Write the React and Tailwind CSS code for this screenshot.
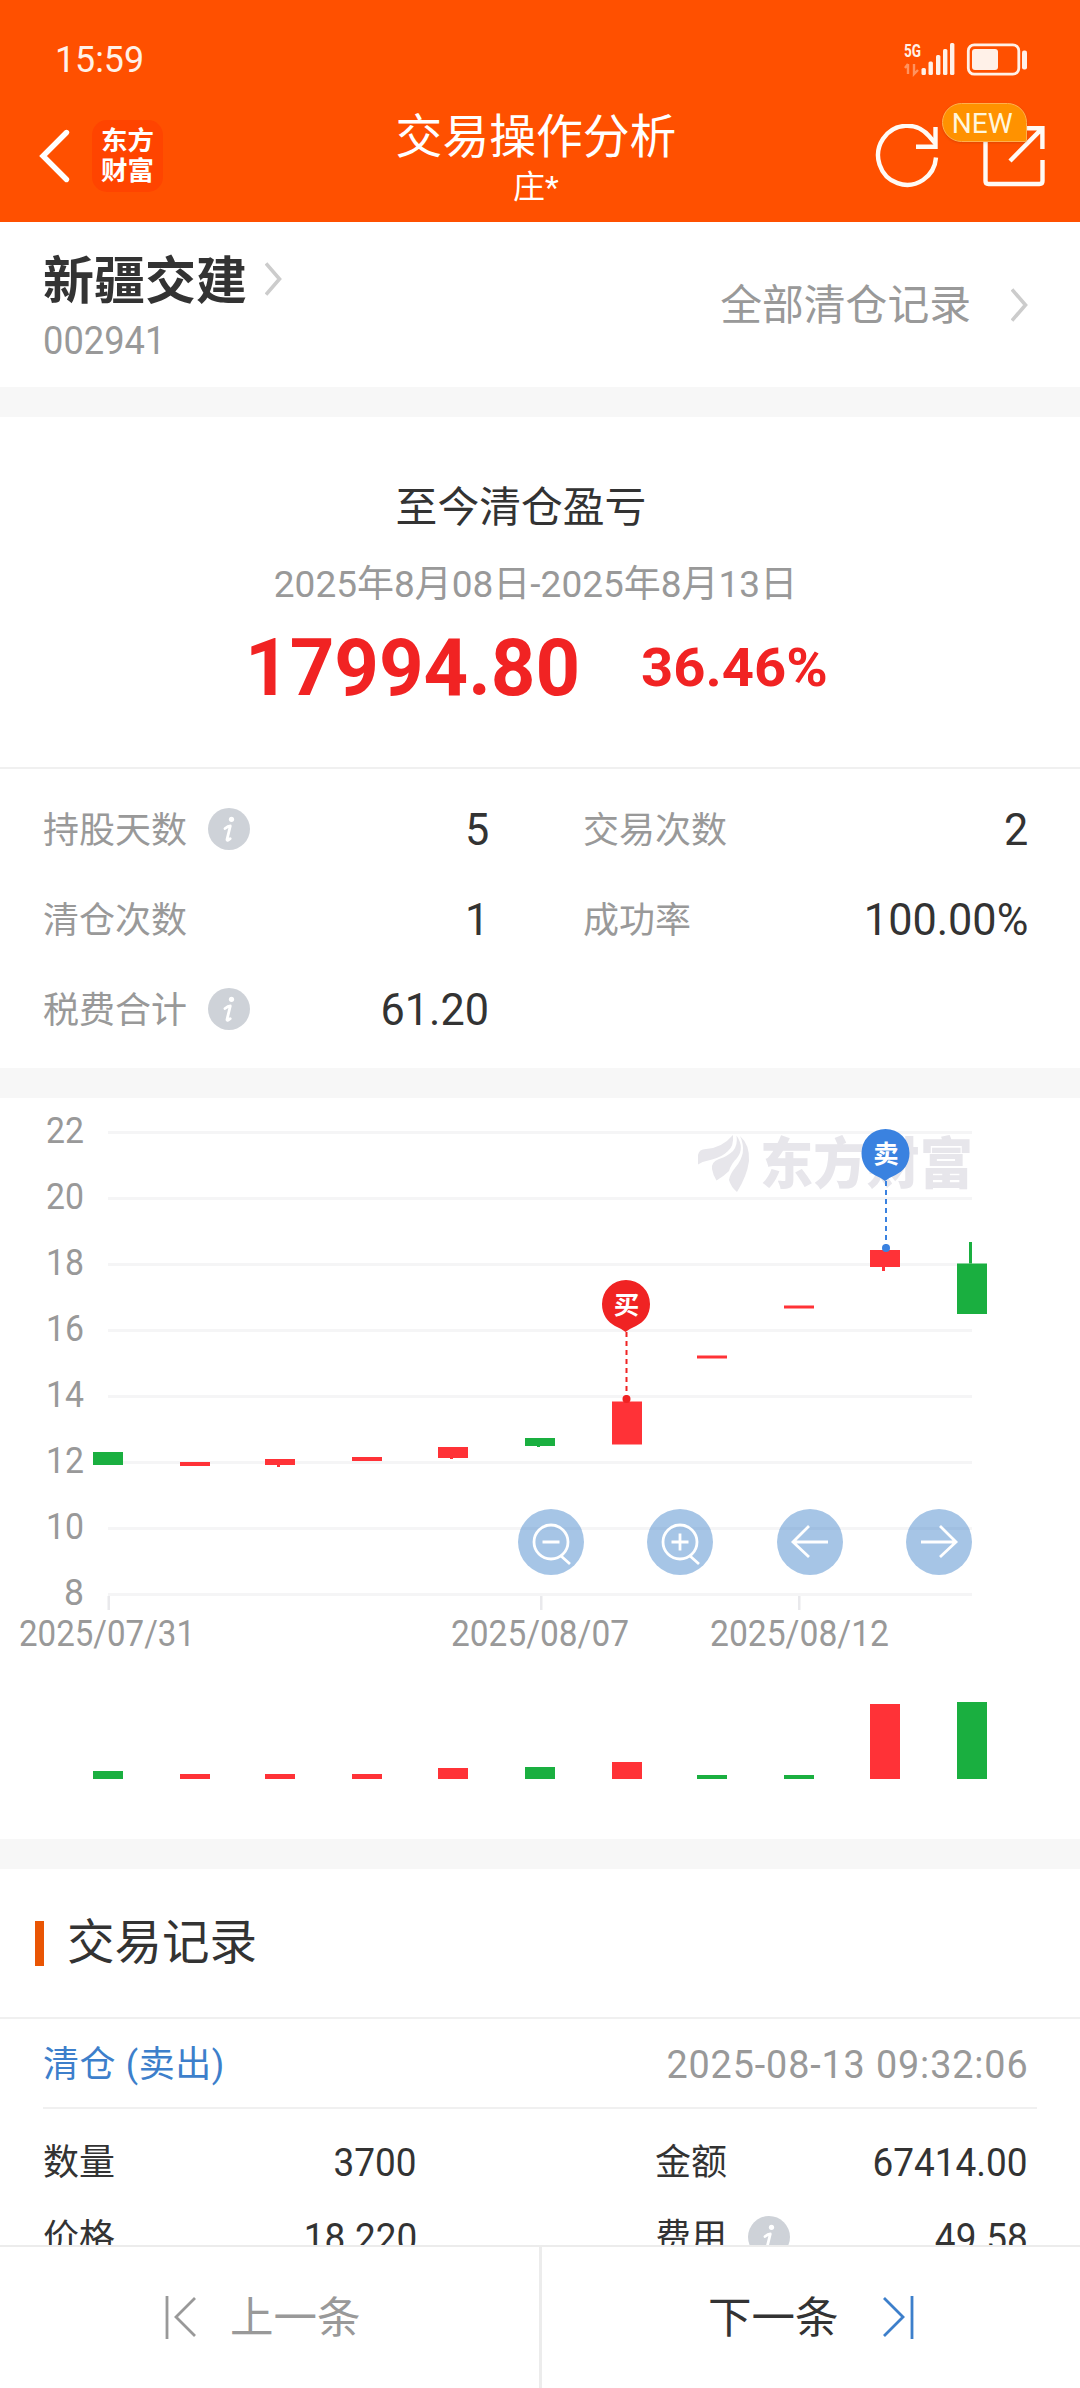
import clsx from 'clsx'

const UP = '#ff3237'
const DOWN = '#1aaf40'

const gridValues = [22, 20, 18, 16, 14, 12, 10, 8]

// y values are in the chart's own coordinate space
const candles = [
  { x: 93, top: 354, bottom: 367, color: DOWN },
  { x: 180, top: 364, bottom: 368, color: UP },
  { x: 265, top: 361, bottom: 367, low: 369, color: UP },
  { x: 352, top: 359, bottom: 363, color: UP },
  { x: 438, top: 349, bottom: 360, low: 361, color: UP },
  { x: 525, top: 340, bottom: 348, low: 349, color: DOWN },
  { x: 612, top: 303.5, bottom: 346.5, color: UP },
  { x: 697, top: 257.5, bottom: 260.5, color: UP },
  { x: 784, top: 207.5, bottom: 210.5, color: UP },
  { x: 870, top: 152, bottom: 169, low: 173, color: UP },
  { x: 957, top: 165.5, bottom: 216, high: 144, color: DOWN },
]

const volumes = [8, 5, 5, 5, 11, 12, 17, 4, 4, 75, 77]

const dates = [
  { x: 108.5, start: 19, length: 176, label: '2025/07/31' },
  { x: 541, start: 451, length: 178, label: '2025/08/07' },
  { x: 799, start: 710, length: 179, label: '2025/08/12' },
]

function Num({ className, children }) {
  return <span className={clsx('inline-block', className)}>{children}</span>
}

function InfoIcon({ className }) {
  return (
    <svg viewBox="0 0 42 42" className={clsx('h-[42px] w-[42px] shrink-0', className)}>
      <circle cx="21" cy="21" r="21" fill="#ced2d8" />
      <circle cx="23.5" cy="11.3" r="2.6" fill="#fff" />
      <path d="M17 20.5q3-2.500 5.300-2.500l-3.300 13.500q-.2 2 3.200-.8" fill="none" stroke="#fff" strokeWidth="2.8" strokeLinecap="round" strokeLinejoin="round" />
    </svg>
  )
}

function Chevron() {
  return (
    <svg viewBox="0 0 17 34" className="h-[34px] w-[17px]">
      <path d="M1 1.5 14.5 17 1 32.5" fill="none" stroke="#ccc" strokeWidth="3.6" />
    </svg>
  )
}

function StatusBar() {
  return (
    <div className="flex h-[103px] items-start justify-between pt-[39px] pr-[52px] pl-[55px] text-[#fff1e8]">
      <Num className="origin-left scale-x-[0.98] text-[36.5px] leading-[42px]">15:59</Num>
      <svg viewBox="0 0 124 34" className="mt-1 h-[34px] w-[124px] overflow-visible" fill="currentColor">
        <text x="0" y="14" fontSize="19" fontWeight="700" textLength="17" lengthAdjust="spacingAndGlyphs">5G</text>
        <path d="M4 21v10M4 21l-3 4M10 21v10l4-4" fill="none" stroke="#ff935f" strokeWidth="2.4" />
        <rect x="17.5" y="25" width="4.4" height="7" rx="1.5" />
        <rect x="24.5" y="18.5" width="4.4" height="13.5" rx="1.5" />
        <rect x="32" y="12" width="4.4" height="20" rx="1.5" />
        <rect x="39" y="6" width="4.4" height="26" rx="1.5" />
        <rect x="46" y="0" width="4.4" height="32" rx="1.5" />
        <rect x="64.3" y="1.8" width="50.5" height="29.4" rx="6" fill="none" stroke="currentColor" strokeWidth="2.8" />
        <rect x="68" y="6" width="26" height="21" rx="3" />
        <rect x="118" y="7.5" width="5" height="19" rx="2" />
      </svg>
    </div>
  )
}

function Header() {
  return (
    <header className="h-[222px] bg-[#ff5000] text-white">
      <StatusBar />
      <div className="relative flex h-[106px] items-start justify-between pr-[35px] pl-[38px]">
        <div className="flex items-center pt-[17px]">
          <svg viewBox="0 0 34 56" className="h-[56px] w-[34px]">
            <path d="M28.5 4.5 5 28l23.5 23.5" fill="none" stroke="#fff" strokeWidth="5.4" strokeLinecap="round" />
          </svg>
          <div className="ml-5 flex h-[72px] w-[71px] flex-col items-center justify-center rounded-[15px] bg-[#ff4400] text-[26.5px] leading-[30px] font-bold">
            <span>东方</span>
            <span>财富</span>
          </div>
        </div>

        <div className="absolute inset-x-0 top-[7px] flex flex-col items-center">
          <h1 className="pr-2 text-[46.8px] leading-[54px]">交易操作分析</h1>
          <p className="pr-2 text-[32px] leading-[46px]">庄*</p>
        </div>

        <div className="relative flex gap-11 pt-[21px]">
          <svg viewBox="0 0 66 66" className="h-[66px] w-[66px]" fill="none" stroke="#fffaf5" strokeWidth="4.4">
            <path d="M63 33.5a29 29.5 0 1 1-7-21.5l6 7" />
            <path d="M62.5 3v19.8H43" />
          </svg>
          <svg viewBox="0 0 62 66" className="h-[66px] w-[62px]" fill="none" stroke="#fffaf5" strokeWidth="4.4">
            <path d="M2.5 14v43q0 3 3 3h51q3 0 3-3V36" />
            <path d="M36 4.2h23.4V25M59 4.6 27 37" />
          </svg>
          <div className="absolute top-0 left-[69px] flex h-[39px] w-[85px] items-center justify-center rounded-[20px] rounded-br-[2px] border border-[#ffb04d] bg-[#ff9200] pt-[3px] pr-1 text-[27px] text-[#fff6dc] shadow">
            <Num className="scale-x-[1.04]">NEW</Num>
          </div>
        </div>
      </div>
    </header>
  )
}

function StockBar() {
  return (
    <section className="flex h-[165px] justify-between pr-[52px] pl-[43px]">
      <div className="pt-[30px]">
        <div className="flex items-center gap-[18px]">
          <span className="text-[51px] leading-[60px] font-bold">新疆交建</span>
          <span className="-mt-1.5">
            <Chevron />
          </span>
        </div>
        <Num className="origin-left scale-x-[0.93] text-[39px] leading-[58px] text-[#999]">002941</Num>
      </div>
      <div className="flex items-center gap-10 text-[41.8px] leading-none text-[#999]">
        <span className="pt-0.5">全部清仓记录</span>
        <Chevron />
      </div>
    </section>
  )
}

function Summary() {
  return (
    <section className="h-[350px] pt-[62px] text-center">
      <h2 className="pr-[38px] text-[41.8px] leading-[58px]">至今清仓盈亏</h2>
      <p className="mt-5 pr-[9px] text-[37px] leading-[56px] text-[#999]">
        <Num>2025年8月08日-2025年8月13日</Num>
      </p>
      <div className="flex h-[110px] items-center pl-[245px] font-bold text-[#f12323]">
        <Num className="w-[396px] origin-left scale-x-[0.985] text-left text-[79px] leading-none">17994.80</Num>
        <Num className="origin-left scale-x-[1.04] text-[54px] leading-none">36.46%</Num>
      </div>
    </section>
  )
}

function Stat({ label, value, info }) {
  return (
    <div className="flex h-[90px] items-center">
      <span className="pt-[3px] text-[36px]  text-[#999]">{label}</span>
      {info && <InfoIcon className="ml-[21px]" />}
      <Num className="ml-auto origin-right scale-x-[0.96] pt-0.5 text-[45px]">{value}</Num>
    </div>
  )
}

function Stats() {
  return (
    <section className="grid h-[301px] grid-cols-[446px_445px] content-start gap-x-[94px] border-t-2 border-[#f0f0f0] pt-[15px] pl-[43px]">
      <Stat label="持股天数" value="5" info />
      <Stat label="交易次数" value="2" />
      <Stat label="清仓次数" value="1" />
      <Stat label="成功率" value="100.00%" />
      <Stat label="税费合计" value="61.20" info />
    </section>
  )
}

function Pin({ x, top, end, color, label }) {
  return (
    <g>
      <path d={`M${x} ${top + 52}V${end}`} stroke={color} strokeWidth="2" strokeDasharray="5 4" />
      <circle cx={x} cy={end} r="4" fill={color} />
      <path
        transform={`translate(${x - 24.5} ${top})`}
        d="M24 0a24 24 0 0 0-24 24c0 11 6 18 13 22q6 2.500 10.500 6q4.500-3.500 10.500-6c8-4 14-11 14-22a24 24 0 0 0-24-24z"
        fill={color}
      />
      <text x={x} y={top + 33.5} textAnchor="middle" fontSize="25.5" fontWeight="700" fill="#fff">{label}</text>
    </g>
  )
}

function ZoomGlyph({ plus }) {
  return (
    <>
      <circle cx="33" cy="33" r="17" />
      <path d="M24.5 33h17M43 47l9 8" />
      {plus && <path d="M33 24.5v17" />}
    </>
  )
}

function ChartButton({ children }) {
  return (
    <button className="h-[66px] w-[66px] rounded-full bg-[#3a7fc8]/45">
      <svg viewBox="0 0 66 66" className="h-[66px] w-[66px]" fill="none" stroke="#fff" strokeWidth="2.8">
        {children}
      </svg>
    </button>
  )
}

function PriceChart() {
  return (
    <section className="relative h-[741px]">
      <svg viewBox="0 0 1080 741" className="block h-[741px] w-[1080px]">
        {gridValues.map((v, i) => (
          <g key={v}>
            <rect x="108" y={33 + i * 66} width="864" height="3" fill="#f5f5f6" />
            <text
              x={v > 9 ? 46 : 64}
              y={44.5 + i * 66}
              fontSize="36.5"
              fill="#999"
              textLength={v > 9 ? 38 : 20}
              lengthAdjust="spacingAndGlyphs"
            >
              {v}
            </text>
          </g>
        ))}

        {/* watermark */}
        <g fill="#e7e6eb">
          <path d="M698 66V57Q699 51 706 51Q722 50 733 37Q734 48 728 53Q722 59 712 61.500Q704 63 698 66.500Z" />
          <path d="M736.500 37.500Q738 47 733 53Q728 58 719 61Q711 64 712 71Q713 77 716.500 82.500Q724 78 729 73Q731 66 737 60Q745 50 736.500 37.500Z" />
          <path d="M740 38Q750 47 749 63Q747 78 737 94Q731 89 729 82Q730 76 735 70Q748 55 740 38Z" />
          <text x="760" y="85" fontSize="55" fontWeight="900" textLength="213" lengthAdjust="spacingAndGlyphs">东方财富</text>
        </g>

        {candles.map((c) => (
          <g key={c.x} fill={c.color}>
            <rect x={c.x} y={c.top} width="30" height={c.bottom - c.top} />
            {c.low && <rect x={c.x + 12} y={c.bottom} width="3" height={c.low - c.bottom} />}
            {c.high && <rect x={c.x + 12} y={c.high} width="3" height={c.top - c.high} />}
          </g>
        ))}

        {dates.map((d) => (
          <g key={d.label}>
            <rect x={d.x - 1} y="498" width="2.5" height="14" fill="#e9e9ec" />
            <text x={d.start} y="547.5" fontSize="36.5" fill="#999" textLength={d.length} lengthAdjust="spacingAndGlyphs">
              {d.label}
            </text>
          </g>
        ))}

        {volumes.map((h, i) => (
          <rect key={candles[i].x} x={candles[i].x} y={681 - h} width="30" height={h} fill={i === 7 || i === 8 ? DOWN : candles[i].color} />
        ))}

        <Pin x={626.5} top={182} end={301} color="#f02323" label="买" />
        <Pin x={886} top={31} end={150} color="#3a82e0" label="卖" />
      </svg>

      <div className="absolute top-[411px] left-[518px] flex gap-[63.3px]">
        <ChartButton><ZoomGlyph /></ChartButton>
        <ChartButton><ZoomGlyph plus /></ChartButton>
        <ChartButton><path d="M51 33H17M32 17 16 33l16 15" /></ChartButton>
        <ChartButton><path d="M15 33h34M34 17l16 16-16 15" /></ChartButton>
      </div>
    </section>
  )
}

function RecordCell({ label, value, info }) {
  return (
    <div className="flex h-[75px] items-center">
      <span className="pt-[3px] text-[36px]">{label}</span>
      {info && <InfoIcon className="ml-[21px]" />}
      <Num className="ml-auto origin-right scale-x-[0.96] pt-[3px] text-[38.5px]">{value}</Num>
    </div>
  )
}

function Records() {
  return (
    <section className="h-[376px] overflow-hidden">
      <div className="flex h-[150px] items-center border-b-2 border-[#f0f0f0] pl-[35px]">
        <span className="h-[45px] w-[9px] bg-[#e95504]" />
        <h2 className="ml-[23px] pt-0.5 text-[47.5px] leading-none">交易记录</h2>
      </div>
      <div className="mr-[43px] ml-[43px] flex h-[90px] items-center justify-between border-b-2 border-[#f0f0f0] pt-[3px] pr-[8px]">
        <span className="text-[36px] tracking-[0.6px] text-[#3d7fcb]">清仓 (卖出)</span>
        <Num className="origin-right scale-x-[0.98] text-[38.5px] tracking-[0.9px] text-[#999]">2025-08-13 09:32:06</Num>
      </div>
      <div className="grid grid-cols-[374px_373px] gap-x-[238px] pt-[15px] pl-[43px]">
        <RecordCell label="数量" value="3700" />
        <RecordCell label="金额" value="67414.00" />
        <RecordCell label="价格" value="18.220" />
        <RecordCell label="费用" value="49.58" info />
      </div>
    </section>
  )
}

function Pager() {
  return (
    <footer className="flex h-[143px] border-t-2 border-[#ececec] text-[43.5px]">
      <button className="flex h-full w-[542px] items-center gap-[34px] border-r-3 border-[#ececec] pl-[164px] text-[#999]">
        <svg viewBox="0 0 32 43" className="h-[43px] w-8" fill="none" stroke="currentColor" strokeWidth="2.8">
          <path d="M3 0v43M31 2 12 21l19 19" />
        </svg>
        <span className="pt-0.5">上一条</span>
      </button>
      <button className="flex h-full flex-1 items-center gap-11 pl-[166px]">
        <span className="pt-0.5">下一条</span>
        <svg viewBox="0 0 32 43" className="h-[43px] w-8 text-[#3d7fcb]" fill="none" stroke="currentColor" strokeWidth="2.8">
          <path d="M29 0v43M1 2l19 19L1 40" />
        </svg>
      </button>
    </footer>
  )
}

function Gap() {
  return <div className="h-[30px] bg-[#f7f7f7]" />
}

export default function App() {
  return (
    <div className="h-[2388px] w-[1080px] overflow-hidden bg-white font-[family-name:Roboto,'Noto_Sans_CJK_SC',sans-serif] text-[#333]">
      <Header />
      <StockBar />
      <Gap />
      <Summary />
      <Stats />
      <Gap />
      <PriceChart />
      <Gap />
      <Records />
      <Pager />
    </div>
  )
}
